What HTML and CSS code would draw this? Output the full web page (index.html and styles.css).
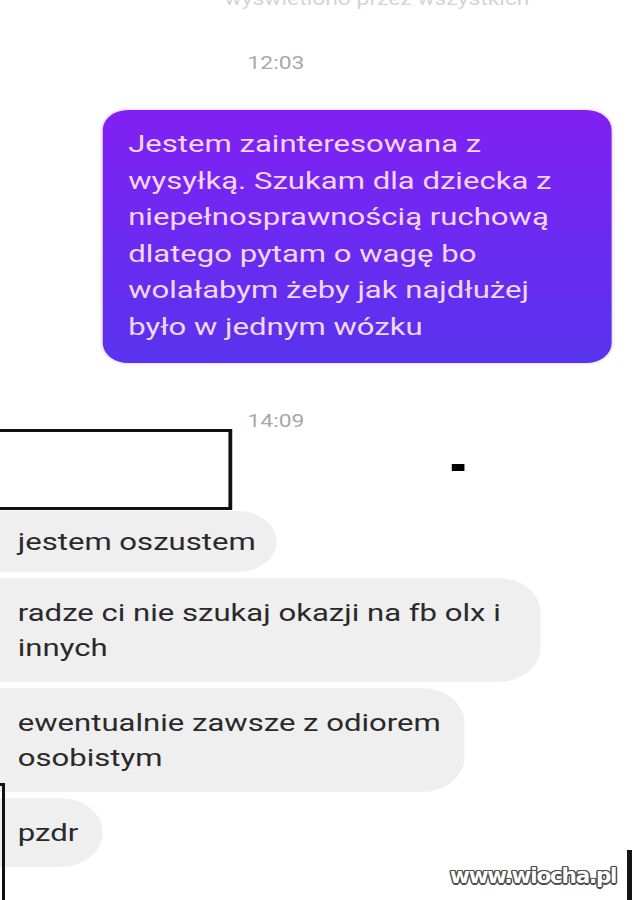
FILE: index.html
```html
<!DOCTYPE html>
<html lang="pl">
<head>
<meta charset="utf-8">
<title>Czat</title>
<link rel="stylesheet" href="styles.css">
</head>
<body>
<div class="stage">
  <div class="note"><span>wyświetlono przez wszystkich</span></div>
  <div class="time t1">12:03</div>
  <div class="sent">Jestem zainteresowana z<br>wysyłką. Szukam dla dziecka z<br>niepełnosprawnością ruchową<br>dlatego pytam o wagę bo<br>wolałabym żeby jak najdłużej<br>było w jednym wózku</div>
  <div class="time t2">14:09</div>
  <div class="redact-row">
    <div class="redact"></div>
    <div class="dash"></div>
  </div>
  <div class="received">
    <div class="bubble b1">jestem oszustem</div>
    <div class="bubble wide">radze ci nie szukaj okazji na fb olx i<br>innych</div>
    <div class="bubble">ewentualnie zawsze z odiorem<br>osobistym</div>
    <div class="bubble">pzdr</div>
  </div>
</div>
<div class="redact-corner"></div>
<div class="edge"></div>
<div class="watermark">www.wiocha.pl</div>
</body>
</html>
```
FILE: styles.css
```css
html, body {
  margin: 0;
  padding: 0;
  background: #ffffff;
}
body {
  position: relative;
  width: 632px;
  height: 900px;
  overflow: hidden;
  font-family: Roboto, "Liberation Sans", sans-serif;
}
.stage {
  width: 498px;
  transform: scaleX(1.269);
  transform-origin: 0 0;
  display: flex;
  flex-direction: column;
  align-items: flex-start;
}
.note {
  height: 10px;
  overflow: hidden;
  padding-left: 177px;
  display: flex;
  align-items: flex-end;
}
.note span {
  display: block;
  font-size: 18px;
  line-height: 22px;
  color: #d4d4d4;
  white-space: nowrap;
}
.time {
  font-size: 18px;
  line-height: 22px;
  color: #a8a8a8;
  padding-left: 195px;
}
.t1 { margin-top: 42px; }
.t2 { margin-top: 47px; }
.sent {
  margin-top: 36px;
  margin-left: 81px;
  width: 401px;
  box-sizing: border-box;
  padding: 16px 0 17px 20px;
  background: linear-gradient(180deg, #8120f3 0%, #6a2bf1 55%, #5834ee 100%);
  border-radius: 20px;
  box-shadow: 0 0 3px rgba(205, 160, 255, 0.7);
  color: #f3d6f6;
  font-size: 24.5px;
  line-height: 36.6px;
}
.redact-row {
  margin-top: -3px;
  display: flex;
  align-items: flex-start;
}
.redact {
  margin-left: -3px;
  width: 186px;
  height: 81px;
  box-sizing: border-box;
  border: 3px solid #111;
  background: #fff;
}
.dash {
  margin-left: 173px;
  margin-top: 35px;
  width: 10px;
  height: 7px;
  background: #000;
}
.received {
  margin-top: 1px;
  display: flex;
  flex-direction: column;
  align-items: flex-start;
  gap: 6px;
}
.bubble {
  margin-left: -20px;
  padding: 17px 19px 17px 34px;
  background: #efefef;
  border-radius: 0 34px 34px 0;
  color: #2a2a2a;
  font-size: 24.5px;
  line-height: 35px;
  white-space: nowrap;
}
.bubble.b1 {
  padding-top: 13px;
  padding-bottom: 13px;
  padding-right: 17px;
}
.bubble.wide {
  padding-right: 31px;
}
.redact-corner {
  position: absolute;
  left: -20px;
  top: 783px;
  width: 25px;
  height: 160px;
  box-sizing: border-box;
  border: 3px solid #111;
}
.edge {
  position: absolute;
  right: 0;
  top: 850px;
  width: 5px;
  height: 50px;
  background: #151515;
}
.watermark {
  position: absolute;
  left: 450px;
  top: 862px;
  font-family: "DejaVu Sans", sans-serif;
  font-weight: bold;
  font-size: 21.5px;
  letter-spacing: -1.2px;
  line-height: 28px;
  color: #ffffff;
  text-shadow:
    1.5px 0 0 #4d4d4d, -1.5px 0 0 #4d4d4d, 0 1.5px 0 #4d4d4d, 0 -1.5px 0 #4d4d4d,
    1px 1px 0 #4d4d4d, -1px -1px 0 #4d4d4d, 1px -1px 0 #4d4d4d, -1px 1px 0 #4d4d4d;
}
```
